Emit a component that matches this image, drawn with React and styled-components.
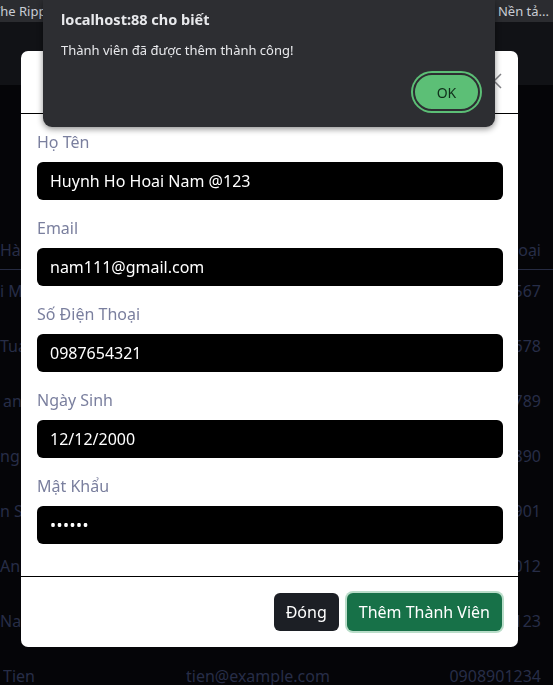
import React from 'react';
import styled, { createGlobalStyle } from 'styled-components';

const GlobalStyle = createGlobalStyle`
  html, body {
    margin: 0;
    padding: 0;
    background-color: #050508;
    font-family: "Noto Sans", "Open Sans", sans-serif;
    overflow: hidden;
  }
`;

const Page = styled.div`
  position: relative;
  width: 553px;
  height: 685px;
  overflow: hidden;
`;

const TopStrip = styled.div`
  height: 22px;
  background-color: #2b2c30;
  display: flex;
  align-items: center;
  justify-content: space-between;
  color: #c9ccd4;
  font-size: 13px;
  white-space: nowrap;
  overflow: hidden;
`;

const StripLeft = styled.span`
  margin-left: -7px;
`;

const StripRight = styled.span`
  margin-right: 4px;
`;

const NavBand = styled.div`
  height: 63px;
  background-color: #111216;
`;

const Table = styled.div`
  display: flex;
  flex-direction: column;
  padding-top: 145px;
  color: #272d47;
  font-size: 16px;
`;

const Row = styled.div`
  display: grid;
  grid-template-columns: 183px 1fr auto;
  align-items: ${(p) => (p.$head ? 'center' : 'start')};
  box-sizing: border-box;
  height: ${(p) => (p.$head ? '40px' : '55px')};
  padding: ${(p) => (p.$head ? '0' : '9px')} 12px 0 ${(p) => p.$indent || 0}px;
  line-height: 24px;
  border-bottom: ${(p) => (p.$head ? '1px solid #262b42' : 'none')};
  white-space: nowrap;
`;

const Cell = styled.span`
  overflow: hidden;
`;

const Overlay = styled.div`
  position: fixed;
  inset: 0;
  display: flex;
  align-items: flex-start;
`;

const Dialog = styled.div`
  margin: 51px 0 0 21px;
  width: 497px;
  background-color: #fff;
  border-radius: 7px;
  display: flex;
  flex-direction: column;
`;

const DialogHeader = styled.div`
  height: 62px;
  border-bottom: 1px solid #000;
  display: flex;
  align-items: center;
  justify-content: flex-end;
  padding: 0 16px;
`;

const CloseButton = styled.button`
  width: 16px;
  height: 16px;
  padding: 0;
  border: none;
  background: none;
  display: flex;
  margin-top: -2px;
`;

const DialogBody = styled.div`
  padding: 16px 15px 32px 16px;
  display: flex;
  flex-direction: column;
  gap: 16px;
`;

const Field = styled.div`
  display: flex;
  flex-direction: column;
  gap: 8px;
`;

const Label = styled.label`
  color: #7a7f9e;
  font-size: 16px;
  line-height: 24px;
`;

const Input = styled.div`
  height: 38px;
  box-sizing: border-box;
  background-color: #000;
  border-radius: 6px;
  color: #fff;
  font-size: 16px;
  display: flex;
  align-items: center;
  padding: 0 13px;
  letter-spacing: ${(p) => (p.$secret ? '0.5px' : 'normal')};
`;

const DialogFooter = styled.div`
  border-top: 1px solid #000;
  padding: 16px 15px 16px 16px;
  display: flex;
  justify-content: flex-end;
  gap: 8px;
`;

const Button = styled.button`
  height: 38px;
  padding: 0 12px;
  border: none;
  border-radius: 6px;
  font-family: "Noto Sans", "Open Sans", sans-serif;
  font-size: 16px;
  color: #fff;
  background-color: ${(p) => (p.$success ? '#177148' : '#1c1f25')};
  box-shadow: ${(p) => (p.$success ? '0 0 0 2px #b9ddc9' : 'none')};
  margin-right: ${(p) => (p.$success ? '1px' : '0')};
`;

const Alert = styled.div`
  position: absolute;
  top: 0;
  left: 43px;
  width: 452px;
  height: 127px;
  box-sizing: border-box;
  background-color: #2d2e32;
  border-radius: 0 0 9px 9px;
  box-shadow: 0 2px 6px rgba(0, 0, 0, 0.45);
  padding: 8px 15px 14px 18px;
  display: flex;
  flex-direction: column;
  font-family: "Noto Sans", "Open Sans", sans-serif;
  color: #e8e9ec;
`;

const AlertTitle = styled.div`
  font-size: 14.5px;
  font-weight: 700;
  line-height: 22px;
`;

const AlertText = styled.div`
  font-size: 13px;
  line-height: 20px;
  margin-top: 10px;
`;

const AlertActions = styled.div`
  display: flex;
  justify-content: flex-end;
  margin-top: auto;
`;

const OkButton = styled.button`
  width: 67px;
  height: 38px;
  border-radius: 19px;
  border: 2px solid #2d2e32;
  background-color: #5cbf76;
  box-shadow: 0 0 0 2px #5cbf76;
  color: #10301b;
  font-family: "Noto Sans", "Open Sans", sans-serif;
  font-size: 14px;
  margin: 0 0 2px 0;
`;

const rows = [
  ['i Mai', 'mai@example.com', '0901234567', 0],
  ['Tuan', 'tuan@example.com', '0912345678', 0],
  ['an', 'an@example.com', '0923456789', 3],
  ['ng Hoa', 'hoa@example.com', '0934567890', 0],
  ['n Son', 'son@example.com', '0945678901', 0],
  ['Anh', 'anh@example.com', '0956789012', 0],
  ['Nam', 'nam@example.com', '0967890123', 0],
  ['Tien', 'tien@example.com', '0908901234', 3],
];

const fields = [
  ['Họ Tên', 'Huynh Ho Hoai Nam @123'],
  ['Email', 'nam111@gmail.com'],
  ['Số Điện Thoại', '0987654321'],
  ['Ngày Sinh', '12/12/2000'],
  ['Mật Khẩu', '••••••', true],
];

function App() {
  return (
    <Page>
      <GlobalStyle />
      <TopStrip>
        <StripLeft>The Ripper</StripLeft>
        <StripRight>- Nền tả...</StripRight>
      </TopStrip>
      <NavBand />
      <Table>
        <Row $head>
          <Cell>Hành Động</Cell>
          <Cell>Email</Cell>
          <Cell>Số Điện Thoại</Cell>
        </Row>
        {rows.map(([name, email, phone, indent]) => (
          <Row key={phone} $indent={indent}>
            <Cell>{name}</Cell>
            <Cell>{email}</Cell>
            <Cell>{phone}</Cell>
          </Row>
        ))}
      </Table>

      <Overlay>
        <Dialog>
          <DialogHeader>
            <CloseButton aria-label="Close">
              <svg width="16" height="16" viewBox="0 0 16 16">
                <path d="M1 1 L15 15 M15 1 L1 15" stroke="#808085" strokeWidth="1.5" fill="none" />
              </svg>
            </CloseButton>
          </DialogHeader>
          <DialogBody>
            {fields.map(([label, value, secret]) => (
              <Field key={label}>
                <Label>{label}</Label>
                <Input $secret={secret}>{value}</Input>
              </Field>
            ))}
          </DialogBody>
          <DialogFooter>
            <Button>Đóng</Button>
            <Button $success>Thêm Thành Viên</Button>
          </DialogFooter>
        </Dialog>
      </Overlay>

      <Alert>
        <AlertTitle>localhost:88 cho biết</AlertTitle>
        <AlertText>Thành viên đã được thêm thành công!</AlertText>
        <AlertActions>
          <OkButton>OK</OkButton>
        </AlertActions>
      </Alert>
    </Page>
  );
}

export default App;
